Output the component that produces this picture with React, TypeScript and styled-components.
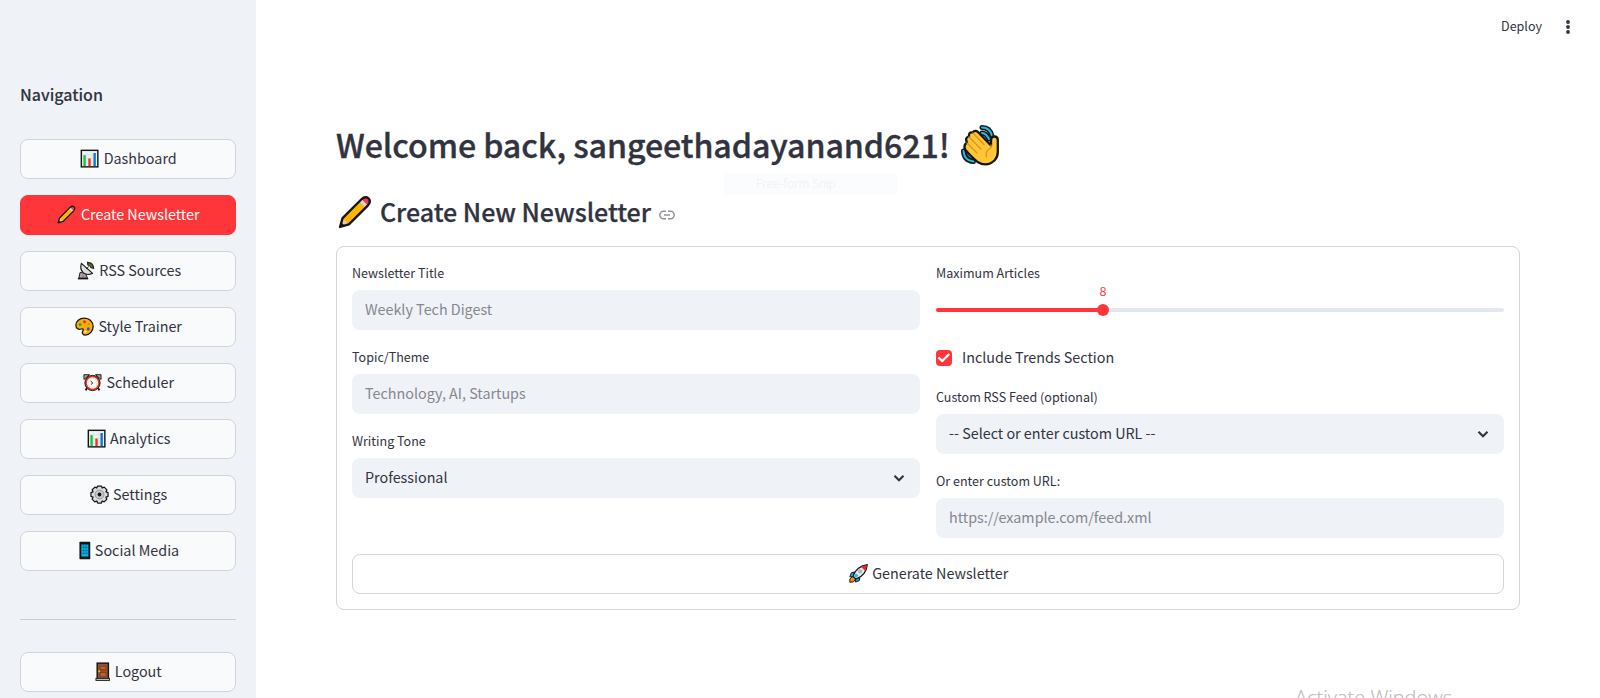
import React from 'react';
import styled, { createGlobalStyle } from 'styled-components';

const INK = '#31333f';
const RED = '#ff3639';
const FIELD = '#eff2f7';
const LINE = '#d3d4d7';

const GlobalStyle = createGlobalStyle`
  * { box-sizing: border-box; }
  body {
    margin: 0;
    background: #fff;
    color: ${INK};
    font-family: "Noto Sans CJK SC", "Noto Sans", sans-serif;
    font-size: 14.33px;
  }
`;

const Page = styled.div`
  position: relative;
  display: flex;
  width: 1600px;
  height: 698px;
  overflow: hidden;
`;

const Sidebar = styled.aside`
  flex: none;
  width: 256px;
  height: 698px;
  padding: 81px 20px 0;
  background: ${FIELD};
`;

const NavTitle = styled.h3`
  margin: 0 0 31px;
  height: 27px;
  line-height: 27px;
  font-size: 16px;
  font-weight: 500;
  -webkit-text-stroke: 0.1px ${INK};
`;

const NavList = styled.nav`
  display: flex;
  flex-direction: column;
  gap: 16px;
`;

const Button = styled.button<{ $primary?: boolean; $plain?: boolean }>`
  display: flex;
  align-items: center;
  justify-content: center;
  width: 100%;
  height: 40px;
  margin: 0;
  padding: 0 0 1px;
  border: 1px solid ${p => (p.$primary ? RED : LINE)};
  border-radius: 8px;
  background: ${p => (p.$primary ? RED : p.$plain ? '#fff' : '#f9fafc')};
  color: ${p => (p.$primary ? '#fff' : INK)};
  font: inherit;
`;

const ButtonText = styled.span`
  line-height: 24px;
  padding-bottom: 2px;
`;

const Glyph = styled.svg<{ $cell?: number }>`
  flex: none;
  width: 19px;
  height: 19px;
  margin-left: 1px;
  margin-right: ${p => (p.$cell ?? 24.4) - 20}px;
`;

const Divider = styled.hr`
  margin: 48px 0 32px;
  border: 0;
  border-top: 1px solid #c9ccd2;
`;

const Main = styled.main`
  flex: 1;
  display: flex;
  flex-direction: column;
`;

const TopBar = styled.header`
  display: flex;
  justify-content: flex-end;
  align-items: center;
  gap: 24px;
  height: 54px;
  padding-right: 30px;
`;

const Deploy = styled.span`
  font-size: 12.54px;
  line-height: 20px;
  padding-bottom: 2px;
`;

const Content = styled.section`
  padding: 67px 80px 0;
`;

const Title = styled.h1`
  display: flex;
  align-items: center;
  gap: 11px;
  margin: 0;
  height: 50px;
  padding-bottom: 2px;
  font-size: 32.2px;
  line-height: 44px;
  font-weight: 500;
  letter-spacing: -0.1px;
  -webkit-text-stroke: 0.35px ${INK};
`;

const TitleText = styled.span`
  padding-bottom: 3px;
`;

const Subtitle = styled.h2`
  display: flex;
  align-items: center;
  margin: 19px 0 14px;
  height: 42px;
  padding-left: 2px;
  font-size: 25.05px;
  line-height: 38px;
  font-weight: 500;
  letter-spacing: -0.06px;
  -webkit-text-stroke: 0.25px ${INK};
`;

const SubtitleText = styled.span`
  padding: 0 8px 1px;
`;

const Form = styled.form`
  height: 364px;
  padding: 15px;
  border: 1px solid ${LINE};
  border-radius: 8px;
`;

const Columns = styled.div`
  display: grid;
  grid-template-columns: 1fr 1fr;
  gap: 16px;
  height: 292px;
`;

const Column = styled.div`
  display: flex;
  flex-direction: column;
  gap: 16px;
`;

const Field = styled.div`
  height: 68px;
`;

const Label = styled.label`
  display: block;
  height: 28px;
  padding-top: 1px;
  font-size: 12.54px;
  line-height: 20px;
`;

const Box = styled.div<{ $muted?: boolean }>`
  display: flex;
  align-items: center;
  justify-content: space-between;
  height: 40px;
  padding: 0 13px 2px;
  border-radius: 8px;
  background: ${FIELD};
  color: ${p => (p.$muted ? '#858790' : INK)};
  line-height: 24px;
`;

const Chevron = styled.svg`
  width: 16px;
  height: 16px;
  margin-top: 2px;
`;

const SliderTrack = styled.div`
  position: relative;
  height: 4px;
  margin-top: 18px;
  border-radius: 2px;
  background: #e3e7f0;
`;

const SliderFill = styled.div`
  height: 4px;
  border-radius: 2px;
  background: ${RED};
`;

const Thumb = styled.div`
  position: absolute;
  top: -4px;
  width: 12px;
  height: 12px;
  margin-left: -6px;
  border-radius: 50%;
  background: ${RED};
`;

const ThumbValue = styled.span`
  position: absolute;
  bottom: 15px;
  left: 0;
  width: 12px;
  text-align: center;
  font-size: 12.54px;
  line-height: 20px;
  color: ${RED};
`;

const CheckRow = styled.div`
  display: flex;
  align-items: center;
  gap: 10px;
  height: 24px;
`;

const CheckText = styled.span`
  line-height: 24px;
  padding-bottom: 2px;
`;

const SnipTip = styled.div`
  position: absolute;
  left: 724px;
  top: 173px;
  width: 173px;
  height: 22px;
  padding-left: 32px;
  background: #fbfcfe;
  color: #f2f3f5;
  font: 12px/22px "Open Sans", sans-serif;
  letter-spacing: -0.25px;
`;

const Watermark = styled.div`
  position: absolute;
  left: 1295px;
  top: 684px;
  color: #bdbdbd;
  font: 300 20px/28px "Open Sans", sans-serif;
  -webkit-text-stroke: 0.2px #bdbdbd;
  white-space: nowrap;
`;

const K = '#151515';

const art: Record<string, React.ReactNode> = {
  chart: (
    <>
      <rect x="1.400" y="1.400" width="17.400" height="17.400" fill="#f2f2f3" stroke={K} strokeWidth="1.500" />
      <path d="M2.500 6H17.500M2.500 10H17.500M7 2.500V17.500M12.500 2.500V17.500" stroke="#d8dadd" strokeWidth=".6" />
      <path d="M4.800 6.500V18" stroke="#13c443" strokeWidth="2.500" />
      <path d="M10 10V18" stroke="#f0321c" strokeWidth="2.500" />
      <path d="M15.400 4.200V18" stroke="#0878d4" strokeWidth="2.500" />
    </>
  ),
  pencil: (
    <>
      <path d="M1.200 18.800 2.700 13.600 13.800 2.500Q16 .4 18 2 19.600 4 17.500 6.200L6.400 17.300Z" fill="#ffb500" />
      <path d="M12.500 3.800 14 2.300Q16 .9 17.500 2.500 19.100 4 17.700 6L16.200 7.500Z" fill="#d4d4d6" />
      <path d="M13.900 2.500Q16 .9 17.500 2.500 19.100 4 17.500 6.100Z" fill="#f5364f" />
      <path d="M1.700 18.300 3 14 6 17Z" fill="#f2c6a8" />
      <path d="M1.200 18.800 2 16.200 3.800 18Z" fill={K} />
      <path d="M1.200 18.800 2.700 13.600 13.800 2.500Q16 .4 18 2 19.600 4 17.500 6.200L6.400 17.300Z" fill="none" stroke={K} strokeWidth="1.400" strokeLinejoin="round" />
    </>
  ),
  dish: (
    <>
      <path d="M4.300 12 3 18H12L10 13Z" fill="#a8a8aa" stroke={K} strokeLinejoin="round" />
      <path d="M2 18.600H12.800" stroke={K} strokeWidth="1.500" />
      <path d="M5.700 2.500Q3.700 8.500 7.500 12.200 11.700 15.800 17.500 13Z" fill="#dedfe1" stroke={K} strokeWidth="1.200" strokeLinejoin="round" />
      <path d="M10.500 8.500 13.500 5.800" stroke={K} />
      <path d="M12.200 1.500Q18.200 1.800 18.500 7.700L15.800 6.900Q15.300 4.900 12.500 4.200Z" fill="#567b24" stroke="#222b18" strokeWidth="1.300" />
      <circle cx="7.500" cy="15.800" r=".9" fill="#c94a4a" />
    </>
  ),
  palette: (
    <>
      <path d="M10 1.100C4.500 1.100 .9 4.600 .9 8.500 .9 12.500 4 13.500 6.500 12.600 8.800 11.900 9.300 13.600 8 15 6.800 16.800 8.500 19 11 19 15.500 19 19.100 14.500 19.100 10 19.100 5 15 1.100 10 1.100Z" fill="#ffac08" stroke={K} strokeWidth="1.300" />
      <circle cx="5.400" cy="7.800" r="1.600" fill="#13b43a" />
      <circle cx="10" cy="4.900" r="1.600" fill="#ef3020" />
      <circle cx="14.700" cy="7.400" r="1.400" fill="#ed8a13" />
      <circle cx="14" cy="12.500" r="1.600" fill="#1666cf" />
      <circle cx="11" cy="15.600" r="1.100" fill="#fff" />
    </>
  ),
  clock: (
    <>
      <path d="M4 16 2.800 18.300M16 16 17.200 18.300" stroke={K} strokeWidth="2" />
      <path d="M1 6.800V1.800H6.800ZM19 6.800V1.800H13.200Z" fill="#aaa" stroke={K} strokeLinejoin="round" />
      <circle cx="10" cy="10.500" r="8" fill="#e93720" stroke={K} />
      <circle cx="10" cy="10.500" r="6" fill="#f8f8f8" />
      <path d="M8 8.500 10.300 10.500 8.500 12" fill="none" stroke={K} />
      <circle cx="10" cy="10.500" r="4.900" fill="none" stroke="#999" strokeWidth=".8" strokeDasharray=".6 1.960" />
    </>
  ),
  gear: (
    <>
      <path d="M7.800 1.200H12.200L12.800 3.200 15 2.300 17.800 5.200 16.800 7.200 19 8V12L16.800 12.800 17.700 15 14.900 17.800 12.800 16.800 12 19H8L7.200 16.800 5 17.700 2.200 14.900 3.200 12.800 1 12V8L3.200 7.200 2.300 5 5.200 2.200 7.200 3.200Z" fill="#dddddf" stroke={K} strokeWidth="1.300" strokeLinejoin="round" />
      <circle cx="10" cy="10" r="4.700" fill="#c7c8ca" stroke="#929295" strokeWidth="1" />
      <circle cx="10" cy="10" r="2" fill={K} />
    </>
  ),
  phone: (
    <>
      <rect x="1.500" y=".7" width="11.400" height="18.600" rx=".8" fill={K} />
      <rect x="3.500" y="3.700" width="7.400" height="12.600" fill="#00b5ed" />
      <path d="M3.500 6.800H10.900M3.500 10H10.900M3.500 13.200H10.900M6 3.700V13M8.500 3.700V13" stroke="#087498" strokeWidth=".9" />
    </>
  ),
  door: (
    <>
      <rect x="2.300" y="1.200" width="11.800" height="16.600" fill="#9b4f2b" stroke={K} strokeWidth="1.500" />
      <path d="M5.500 4.400H11.500V8H5.500ZM5.500 11H11.500V15.500H5.500Z" fill="#b5653c" stroke="#733516" strokeWidth=".8" />
      <circle cx="4.400" cy="9.700" r="1" fill="#ffc400" />
      <rect x="1" y="17.200" width="14.200" height="2.200" fill="#bbb" stroke={K} strokeWidth=".9" />
    </>
  ),
  rocket: (
    <>
      <path d="M5.500 8.500 2.500 9.200 .9 13.500 5 13.300ZM11.500 14.500 10.800 17.500 6.800 19 6.700 15Z" fill="#14a8dd" stroke={K} strokeLinejoin="round" />
      <path d="M4.300 13 1 15.500 .8 19.200 4.800 18.800 7 15.700Z" fill="#ff8a18" stroke={K} strokeLinejoin="round" />
      <path d="M4.300 13Q7 3 19.300 .7 18 12.500 7 15.900Z" fill="#e9ecf0" stroke={K} strokeWidth="1.200" strokeLinejoin="round" />
      <path d="M12.600 2.900Q16 1.400 18.700 1.300 18.300 4.800 17 7.300Z" fill="#e8262c" />
      <circle cx="11.700" cy="7.800" r="1.900" fill="#b6bcc3" stroke="#9da2aa" strokeWidth=".6" />
      <path d="M5.200 12.800 7.200 14.800 10 12.200 7.300 10Z" fill="#21b9e8" />
    </>
  ),
};

const PencilLarge = styled.svg`
  width: 34px;
  height: 34px;
  margin-top: 1px;
`;

const WaveIcon = styled.svg`
  width: 38px;
  height: 41px;
  margin-top: 1px;
`;

const LinkIcon = styled.svg`
  width: 16px;
  height: 10px;
  margin-top: 7px;
`;

function Wave() {
  return (
    <WaveIcon viewBox="0 0 38 41" fill="none" strokeLinecap="round" strokeLinejoin="round">
      <path d="M21 2.500Q29 2.500 31 11M21 8Q25.500 8.500 28 14M2.500 26Q3 35.500 12.500 36.500M7 28Q8 32 13 32.500" stroke={K} strokeWidth="5" />
      <path d="M21 2.500Q29 2.500 31 11M21 8Q25.500 8.500 28 14M2.500 26Q3 35.500 12.500 36.500M7 28Q8 32 13 32.500" stroke="#20bfe5" strokeWidth="2" />
      <path d="M4.500 25 9 30 16.500 37Q26 42.500 33.500 35.500 36.800 32 36.800 27V15Q36.800 11.500 33.300 11.500 30 11.500 30 15.500V20.500L17 7Q14 4.500 11.800 7.500 7.500 6.500 8 11.500 3.500 12.500 6 17.500 1.800 20.500 4.500 25Z" fill="#ffc636" stroke={K} strokeWidth="2.300" />
      <path d="M12 8 23 19.500M8 12 20 24M6 18 16 28M30 20V23Q23.500 26 25.500 32" stroke="#e6911c" strokeWidth="1.300" />
    </WaveIcon>
  );
}

const navItems = [
  { icon: 'chart', text: 'Dashboard' },
  { icon: 'pencil', text: 'Create Newsletter', active: true },
  { icon: 'dish', text: 'RSS Sources' },
  { icon: 'palette', text: 'Style Trainer' },
  { icon: 'clock', text: 'Scheduler' },
  { icon: 'chart', text: 'Analytics' },
  { icon: 'gear', text: 'Settings' },
  { icon: 'phone', text: 'Social Media', cell: 18 },
];

function ActionButton({ icon, text, cell, primary, plain }: {
  icon: string; text: string; cell?: number; primary?: boolean; plain?: boolean;
}) {
  return (
    <Button type="button" $primary={primary} $plain={plain}>
      <Glyph viewBox="0 0 20 20" fill="none" $cell={cell}>{art[icon]}</Glyph>
      <ButtonText>{text}</ButtonText>
    </Button>
  );
}

function Select({ value }: { value: string }) {
  return (
    <Box>
      <span>{value}</span>
      <Chevron viewBox="0 0 16 16" fill="none">
        <path d="M3.500 5.700 8 10.200 12.500 5.700" stroke={INK} strokeWidth="2.100" />
      </Chevron>
    </Box>
  );
}

function Slider({ value, min, max }: { value: number; min: number; max: number }) {
  const position = `${((value - min) / (max - min)) * 100}%`;
  return (
    <SliderTrack>
      <SliderFill style={{ width: position }} />
      <Thumb style={{ left: position }}>
        <ThumbValue>{value}</ThumbValue>
      </Thumb>
    </SliderTrack>
  );
}

export default function App() {
  return (
    <>
      <GlobalStyle />
      <Page>
        <Sidebar>
          <NavTitle>Navigation</NavTitle>
          <NavList>
            {navItems.map(item => (
              <ActionButton key={item.text} icon={item.icon} text={item.text} cell={item.cell} primary={item.active} />
            ))}
          </NavList>
          <Divider />
          <ActionButton icon="door" text="Logout" cell={20.5} />
        </Sidebar>
        <Main>
          <TopBar>
            <Deploy>Deploy</Deploy>
            <svg width="4" height="14" viewBox="0 0 4 14" fill={INK}>
              <circle cx="2" cy="2" r="1.900" />
              <circle cx="2" cy="7" r="1.900" />
              <circle cx="2" cy="12" r="1.900" />
            </svg>
          </TopBar>
          <Content>
            <Title>
              <TitleText>Welcome back, sangeethadayanand621!</TitleText>
              <Wave />
            </Title>
            <Subtitle>
              <PencilLarge viewBox="0 0 20 20">{art.pencil}</PencilLarge>
              <SubtitleText>Create New Newsletter</SubtitleText>
              <LinkIcon viewBox="0 0 16 10" fill="none" stroke="#92939b" strokeWidth="1.500">
                <path d="M7 1.200H4.600A3.700 3.700 0 0 0 4.600 8.800H7M9 1.200H11.400A3.700 3.700 0 0 1 11.400 8.800H9M5 5H11" />
              </LinkIcon>
            </Subtitle>
            <Form>
              <Columns>
                <Column>
                  <Field>
                    <Label>Newsletter Title</Label>
                    <Box $muted>Weekly Tech Digest</Box>
                  </Field>
                  <Field>
                    <Label>Topic/Theme</Label>
                    <Box $muted>Technology, AI, Startups</Box>
                  </Field>
                  <Field>
                    <Label>Writing Tone</Label>
                    <Select value="Professional" />
                  </Field>
                </Column>
                <Column>
                  <Field>
                    <Label>Maximum Articles</Label>
                    <Slider value={8} min={3} max={20} />
                  </Field>
                  <CheckRow>
                    <svg width="16" height="16" viewBox="0 0 16 16">
                      <rect width="16" height="16" rx="4" fill={RED} />
                      <path d="M2.300 7.300 6.300 11 13.300 4" fill="none" stroke="#fff" strokeWidth="2.300" />
                    </svg>
                    <CheckText>Include Trends Section</CheckText>
                  </CheckRow>
                  <Field>
                    <Label>Custom RSS Feed (optional)</Label>
                    <Select value="-- Select or enter custom URL --" />
                  </Field>
                  <Field>
                    <Label>Or enter custom URL:</Label>
                    <Box $muted>https://example.com/feed.xml</Box>
                  </Field>
                </Column>
              </Columns>
              <ActionButton icon="rocket" text="Generate Newsletter" plain />
            </Form>
          </Content>
        </Main>
        <SnipTip>Free-form Snip</SnipTip>
        <Watermark>Activate Windows</Watermark>
      </Page>
    </>
  );
}
